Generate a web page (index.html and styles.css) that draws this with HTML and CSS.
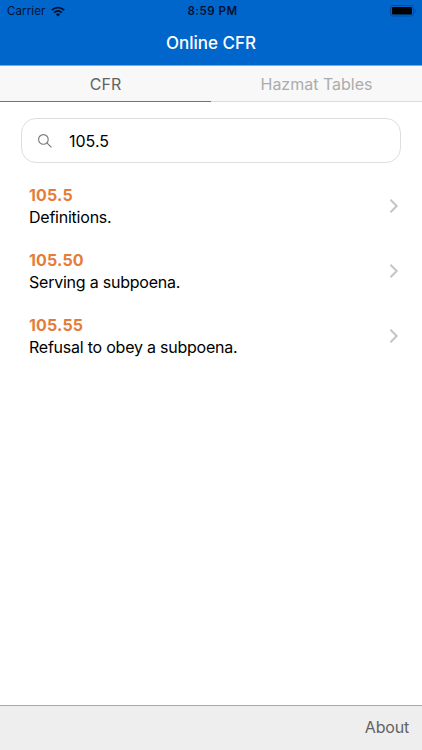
FILE: index.html
```html
<!DOCTYPE html>
<html lang="en">
<head>
  <meta charset="UTF-8" />
  <meta name="viewport" content="width=device-width, initial-scale=1.0"/>
  <title>Online CFR</title>
  <link rel="stylesheet" href="styles.css">
</head>
<body>
  <header class="header">
    <div class="status-bar">
      <div class="carrier">
        <span class="carrier-name">Carrier</span>
        <svg class="wifi" width="14" height="11" viewBox="0 0 14 11" fill="none" stroke="#001233" stroke-width="1.9">
          <path d="M0.8 4.1a9 9 0 0 1 12.4 0"/>
          <path d="M3.1 6.6a5.7 5.7 0 0 1 7.8 0"/>
          <path d="M7 10.5L4.9 8.4a3 3 0 0 1 4.2 0z" fill="#001233" stroke="none"/>
        </svg>
      </div>
      <span class="time">8:59 PM</span>
      <div class="power">
        <svg width="27" height="12" viewBox="0 0 27 12">
          <rect x="0.5" y="0.5" width="23" height="10.5" rx="2.5" fill="none" stroke="#0048a0"/>
          <rect x="2" y="2" width="20" height="7.5" rx="1" fill="#000"/>
          <path d="M25 4v4c1.7-0.7 1.7-3.3 0-4z" fill="#0048a0"/>
        </svg>
      </div>
    </div>
    <h1>Online CFR</h1>
  </header>

  <nav class="tabs">
    <a class="tab active">CFR</a>
    <a class="tab">Hazmat Tables</a>
  </nav>

  <main class="content">
    <div class="search">
      <svg width="14" height="14" viewBox="0 0 14 14" fill="none" stroke="#77777b" stroke-width="1.1">
        <circle cx="5.4" cy="5.4" r="4.8"/>
        <path d="M8.9 8.9L13.4 13.4"/>
      </svg>
      <input type="text" value="105.5" aria-label="Search" />
    </div>

    <ul class="results">
      <li class="result">
        <div class="text">
          <div class="number">105.5</div>
          <div class="name">Definitions.</div>
        </div>
        <svg class="chevron" width="10" height="16" viewBox="0 0 10 16"><path d="M1.5 1.8L7.7 8L1.5 14.2"/></svg>
      </li>
      <li class="result">
        <div class="text">
          <div class="number">105.50</div>
          <div class="name">Serving a subpoena.</div>
        </div>
        <svg class="chevron" width="10" height="16" viewBox="0 0 10 16"><path d="M1.5 1.8L7.7 8L1.5 14.2"/></svg>
      </li>
      <li class="result">
        <div class="text">
          <div class="number">105.55</div>
          <div class="name">Refusal to obey a subpoena.</div>
        </div>
        <svg class="chevron" width="10" height="16" viewBox="0 0 10 16"><path d="M1.5 1.8L7.7 8L1.5 14.2"/></svg>
      </li>
    </ul>
  </main>

  <footer class="footer">
    <a class="about">About</a>
  </footer>
</body>
</html>
```
FILE: styles.css
```css
* {
  box-sizing: border-box;
}

body {
  margin: 0;
  height: 100vh;
  display: flex;
  flex-direction: column;
  font-family: Inter, 'Liberation Sans', sans-serif;
  font-size: 16px;
  background: #fff;
  color: #000;
}

.header {
  height: 66px;
  background: #0066cc;
  border-bottom: 1px solid #74a9e3;
}

.status-bar {
  height: 22px;
  padding: 0 5px 0 7px;
  display: grid;
  grid-template-columns: 1fr auto 1fr;
  align-items: center;
  font-size: 11.5px;
  color: #001233;
}

.carrier {
  display: flex;
  align-items: center;
  gap: 6px;
}

.carrier-name {
  letter-spacing: 0.1px;
}

.time {
  padding-left: 1px;
  font-weight: 600;
  letter-spacing: 0.5px;
}

.power {
  display: flex;
  justify-content: flex-end;
}

h1 {
  margin: 0;
  text-align: center;
  font-size: 17px;
  line-height: 42px;
  font-weight: 500;
  letter-spacing: 0;
  color: #fff;
}

.tabs {
  display: flex;
  height: 36px;
  background: #f8f8f8;
}

.tab {
  flex: 1;
  text-align: center;
  font-size: 16px;
  line-height: 36px;
  color: #acacac;
  border-bottom: 1px solid #dcdcdc;
}

.tab.active {
  color: #636363;
  border-bottom-color: #737373;
}

.content {
  flex: 1;
  padding: 16px 21px 0;
}

.search {
  height: 45px;
  padding-left: 16px;
  display: flex;
  align-items: center;
  gap: 17px;
  border: 1px solid #dedee0;
  border-radius: 15px;
}

.search input {
  flex: 1;
  padding: 0;
  border: none;
  outline: none;
  background: none;
  font: inherit;
}

.results {
  list-style: none;
  margin: 0;
  padding: 10px 2px 0 8px;
}

.result {
  height: 65.2px;
  display: flex;
  align-items: center;
  justify-content: space-between;
}

.text {
  padding-top: 2px;
}

.number {
  line-height: 22px;
  font-weight: 700;
  letter-spacing: 0.15px;
  color: #e57c3a;
}

.name {
  line-height: 23px;
  letter-spacing: -0.23px;
}

.chevron {
  fill: none;
  stroke: #c5c5c9;
  stroke-width: 2;
}

.footer {
  height: 45px;
  padding-right: 13px;
  text-align: right;
  line-height: 43px;
  background: #eee;
  border-top: 1px solid #a8a8a8;
}

.about {
  color: #636363;
  letter-spacing: -0.2px;
}
```
